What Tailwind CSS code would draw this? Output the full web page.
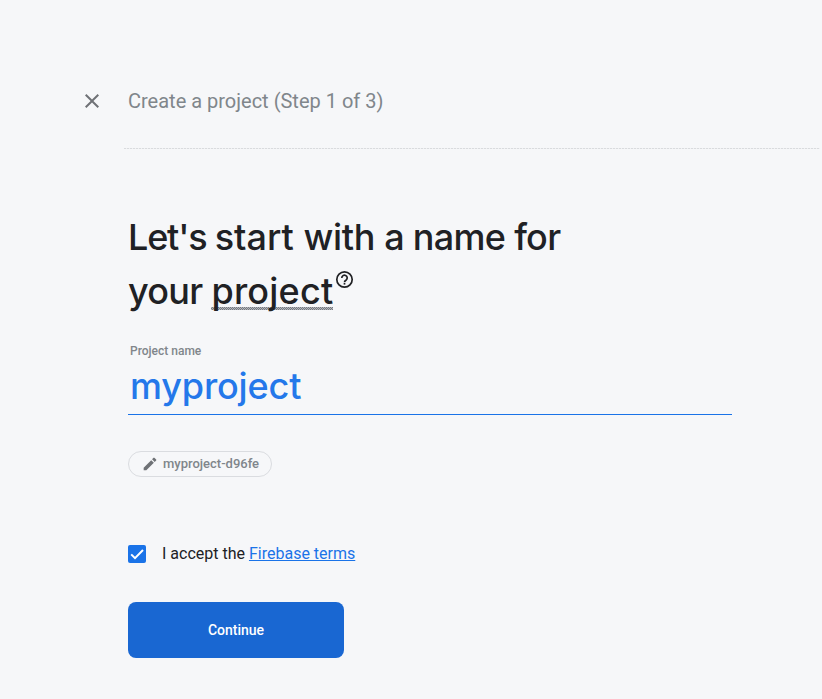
<!DOCTYPE html>
<html lang="en">
<head>
<meta charset="utf-8">
<title>Create a project</title>
<script src="https://cdn.jsdelivr.net/npm/@tailwindcss/browser@4"></script>
</head>
<body class="bg-[#f6f7f9] font-['Roboto',sans-serif] text-[#202124] w-[822px] h-[699px] overflow-hidden">
<header class="flex items-center h-12 mt-[77px] pl-20">
  <button class="size-6 mr-6" aria-label="Close">
    <svg viewBox="0 0 24 24" class="size-6" fill="#6f7276"><path d="M19 6.41 17.59 5 12 10.59 6.41 5 5 6.41 10.59 12 5 17.59 6.41 19 12 13.41 17.59 19 19 17.59 13.41 12z"/></svg>
  </button>
  <div class="text-[20px] leading-6 text-[#80868b] whitespace-nowrap">Create a project (Step 1 of 3)</div>
</header>
<div class="ml-[124px] mt-[23px] w-[696px] h-px bg-[repeating-linear-gradient(90deg,#d9dbde_0_2px,#f0f1f3_2px_3px)]"></div>
<main class="ml-32 w-[604px]">
  <h1 class="pt-[61px] font-['Inter',sans-serif] font-medium text-[36px] leading-[54px] tracking-[-0.7px] whitespace-nowrap">
    <div><span class="tracking-[-1.2px]">Let's </span><span class="tracking-[0px]">start </span><span class="tracking-[-0.3px]">with </span><span class="tracking-[-0.8px]">a </span>name for</div>
    <div class="flex">
      <span>your&nbsp;</span>
      <span class="relative tracking-[0.2px]">project<span class="absolute left-0 bottom-[8px] w-full h-[3px] bg-[repeating-conic-gradient(#777b82_0_25%,#b4b7bc_0_50%)] bg-size-[2px_2px] -z-10"></span></span>
      <svg viewBox="0 0 20 20" class="size-5 mt-[5px] ml-px" fill="none" stroke="#202124" stroke-width="1.7"><circle cx="10.5" cy="10.5" r="7.7"/><path d="M7.8 8.9a2.7 2.7 0 1 1 4.5 2c-1 .8-1.8 1.2-1.8 2.3"/><path d="M10.5 14v1.6"/></svg>
    </div>
  </h1>
  <label class="block mt-[25px] pl-[2px] text-[12px] leading-4 font-medium text-[#80868b]">Project name</label>
  <div class="h-[56px] pl-[2px] border-b border-[#1a73e8] font-['Inter',sans-serif] font-medium text-[36px] leading-[54px] tracking-[-0.15px] text-[#2478ea]">myproject</div>
  <div class="mt-9 h-[26px] w-36 rounded-full border border-[#dadce0] flex items-center pl-[13px] text-[13px] font-medium text-[#80868b] whitespace-nowrap">
    <svg viewBox="0 0 24 24" class="size-4 mr-[5px]" fill="#6f7276"><path d="M2.5 17.5V21.5h4L17.81 10.2l-4-4L2.5 17.5zM21.2 6.8a1 1 0 0 0 0-1.41l-2.6-2.6a1 1 0 0 0-1.41 0l-2.1 2.1 4 4 2.11-2.09z"/></svg>
    <span>myproject-d96fe</span>
  </div>
  <div class="mt-[65px] h-6 flex items-center text-[16px]">
    <span class="size-[18px] mr-4 rounded-[2px] bg-[#1a73e8]"><svg viewBox="0 0 18 18" class="size-[18px]" fill="none" stroke="#fff" stroke-width="2"><path d="M3.2 9.4 7 13.1 15 5"/></svg></span>
    <span>I accept the <a class="text-[#1a73e8] underline">Firebase terms</a></span>
  </div>
  <button class="mt-9 w-54 h-14 rounded-lg bg-[#1967d2] text-white text-[14px] font-medium">Continue</button>
</main>
</body>
</html>
